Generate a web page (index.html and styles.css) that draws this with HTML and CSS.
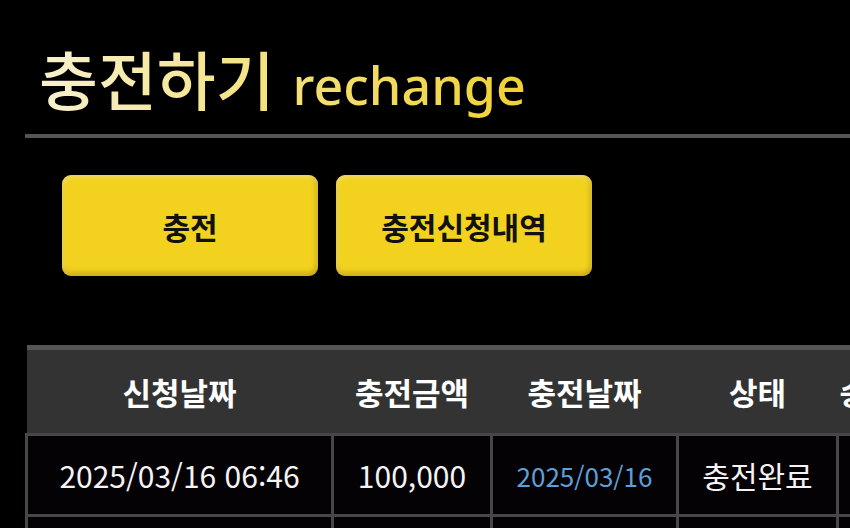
FILE: index.html
```html
<!DOCTYPE html>
<html lang="ko">
<head>
    <meta charset="UTF-8">
    <meta name="viewport" content="width=device-width, initial-scale=1.0">
    <title>충전하기</title>
    <link rel="stylesheet" href="styles.css">
</head>
<body>
    <div class="page">
        <div class="page-head">
            <h1 class="title">충전하기 <span class="en">rechange</span></h1>
        </div>

        <div class="tabs">
            <a class="btn" href="#">충전</a>
            <a class="btn" href="#">충전신청내역</a>
        </div>

        <div class="history">
            <table class="list">
                <thead>
                    <tr>
                        <th class="c-req">신청날짜</th>
                        <th class="c-amt">충전금액</th>
                        <th class="c-date">충전날짜</th>
                        <th class="c-state">상태</th>
                        <th class="c-etc">승인</th>
                    </tr>
                </thead>
                <tbody>
                    <tr>
                        <td>2025/03/16 06:46</td>
                        <td>100,000</td>
                        <td class="done-date">2025/03/16</td>
                        <td>충전완료</td>
                        <td class="etc">-</td>
                    </tr>
                    <tr>
                        <td>2025/03/15 21:12</td>
                        <td>50,000</td>
                        <td class="done-date">2025/03/15</td>
                        <td>충전완료</td>
                        <td class="etc">-</td>
                    </tr>
                </tbody>
            </table>
        </div>
    </div>
</body>
</html>
```

FILE: styles.css
```css
* {
    margin: 0;
    padding: 0;
    box-sizing: border-box;
}

body {
    background: #000;
    overflow: hidden;
    font-family: "Noto Sans CJK KR", "Noto Sans", sans-serif;
    color: #fff;
}

.page {
    padding-left: 25px;
}

/* title + grey rule under it */
.page-head {
    border-bottom: 4px solid #555;
    padding: 37px 0 9px 14px;
}

.title {
    display: inline-block;
    font-size: 64px;
    font-weight: 500;
    line-height: 80px;
    background: linear-gradient(90deg, #f8f1cf 0%, #f4e48a 40%, #efd232 100%);
    -webkit-background-clip: text;
    background-clip: text;
    -webkit-text-fill-color: transparent;
}

.title .en {
    font-family: "Noto Sans", sans-serif;
    font-size: 52px;
    font-weight: 500;
}

.tabs {
    display: flex;
    gap: 18px;
    margin: 37px 0 0 37px;
}

.btn {
    display: flex;
    justify-content: center;
    align-items: center;
    width: 256px;
    height: 101px;
    background: #f2d21e;
    border-radius: 9px;
    color: #111;
    font-size: 30px;
    font-weight: 700;
    text-decoration: none;
    box-shadow: inset 0 3px 4px rgba(255,255,255,0.25),
                inset 0 -4px 5px rgba(120,90,0,0.25),
                inset -3px 0 4px rgba(120,90,0,0.18),
                inset 3px 0 4px rgba(255,255,255,0.15);
}

.history {
    margin-top: 69px;
}

.list {
    width: 920px;
    table-layout: fixed;
    border-collapse: collapse;
    white-space: nowrap;
    text-align: center;
}

.list th {
    height: 87px;
    background: #333;
    border-top: 5px solid #555;
    border-bottom: 2px solid #1c1c1c;
    font-size: 31px;
    font-weight: 700;
    color: #fff;
}

.c-req { width: 306px; }
.c-amt { width: 159px; }
.c-date { width: 186px; }
.c-state { width: 160px; }

.list th.c-etc {
    text-align: left;
    padding-left: 2px;
}

.list td {
    height: 81px;
    border: 3px solid #474747;
    background: #040204;
    font-size: 30px;
    font-weight: 400;
    color: #f4f4f4;
}

.list td.etc {
    padding-left: 40px;
}

.list td.done-date {
    font-size: 26px;
    color: #5e9fd6;
}
```
